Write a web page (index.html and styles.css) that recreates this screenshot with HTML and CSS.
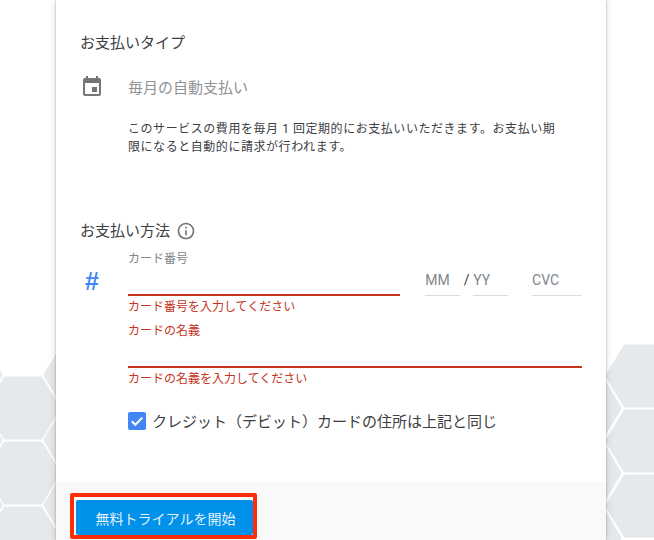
FILE: index.html
```html
<!DOCTYPE html>
<html lang="ja">
<head>
  <meta charset="UTF-8">
  <title>お支払い</title>
  <link rel="stylesheet" href="styles.css">
</head>
<body>
  <svg class="hex-bg" width="654" height="540" viewBox="0 0 654 540">
    <defs>
      <polygon id="hex" points="-35,0 -17.5,-29 17.5,-29 35,0 17.5,29 -17.5,29"></polygon>
    </defs>
    <g class="hex-cells">
      <use href="#hex" x="-35" y="375"></use>
      <use href="#hex" x="-35" y="440"></use>
      <use href="#hex" x="-35" y="505"></use>
      <use href="#hex" x="23" y="408"></use>
      <use href="#hex" x="23" y="473"></use>
      <use href="#hex" x="23" y="538"></use>
      <use href="#hex" x="81" y="375"></use>
      <use href="#hex" x="81" y="440"></use>
      <use href="#hex" x="81" y="505"></use>
      <use href="#hex" x="584" y="408"></use>
      <use href="#hex" x="584" y="473"></use>
      <use href="#hex" x="584" y="538"></use>
      <use href="#hex" x="643" y="376"></use>
      <use href="#hex" x="643" y="441"></use>
      <use href="#hex" x="643" y="506"></use>
    </g>
  </svg>

  <div class="card">
    <section class="pay-type">
      <h2 class="section-title">お支払いタイプ</h2>
      <div class="type-row">
        <svg class="calendar-icon" width="24" height="24" viewBox="0 0 24 24">
          <path d="M17 12h-5v5h5v-5zM16 1v2H8V1H6v2H5c-1.11 0-1.99.9-1.99 2L3 19c0 1.1.89 2 2 2h14c1.1 0 2-.9 2-2V5c0-1.1-.9-2-2-2h-1V1h-2zm3 18H5V8h14v11z"></path>
        </svg>
        <span class="type-name">毎月の自動支払い</span>
      </div>
      <p class="type-note">このサービスの費用を毎月 1 回定期的にお支払いいただきます。お支払い期限になると自動的に請求が行われます。</p>
    </section>

    <section class="pay-method">
      <h2 class="section-title method-title">
        お支払い方法
        <svg class="info-icon" width="20" height="20" viewBox="0 0 24 24">
          <path d="M11 7h2v2h-2zm0 4h2v6h-2zm1-9C6.48 2 2 6.48 2 12s4.48 10 10 10 10-4.48 10-10S17.52 2 12 2zm0 18c-4.41 0-8-3.59-8-8s3.59-8 8-8 8 3.59 8 8-3.59 8-8 8z"></path>
        </svg>
      </h2>

      <div class="card-row">
        <span class="hash">#</span>
        <div class="field number-field">
          <label class="field-label">カード番号</label>
          <div class="field-line error-line"></div>
          <div class="field-error">カード番号を入力してください</div>
        </div>
        <div class="small-field mm-field">
          <span class="small-text">MM</span>
          <div class="field-line"></div>
        </div>
        <span class="slash">/</span>
        <div class="small-field yy-field">
          <span class="small-text">YY</span>
          <div class="field-line"></div>
        </div>
        <div class="small-field cvc-field">
          <span class="small-text">CVC</span>
          <div class="field-line"></div>
        </div>
      </div>

      <div class="field name-field">
        <label class="field-label label-error">カードの名義</label>
        <div class="field-line error-line"></div>
        <div class="field-error">カードの名義を入力してください</div>
      </div>

      <div class="same-address">
        <span class="checkbox">
          <svg width="18" height="18" viewBox="0 0 18 18">
            <path d="M3.8 9.3l3.5 3.5 7-7.2" fill="none" stroke="#fff" stroke-width="2"></path>
          </svg>
        </span>
        <span class="same-text">クレジット（デビット）カードの住所は上記と同じ</span>
      </div>
    </section>

    <div class="card-footer">
      <div class="highlight">
        <button class="start-btn">無料トライアルを開始</button>
      </div>
    </div>
  </div>
</body>
</html>
```

FILE: styles.css
```css
html, body {
  margin: 0;
  padding: 0;
  height: 540px;
  overflow: hidden;
  background-color: #fff;
}
body {
  font-family: "Roboto", "Noto Sans CJK JP", sans-serif;
  color: #3c4043;
}
.hex-bg {
  position: absolute;
  top: 0;
  left: 0;
}
.hex-cells {
  fill: #e6e9ec;
  stroke: #e6e9ec;
  stroke-width: 5;
  stroke-linejoin: round;
}
.card {
  position: relative;
  box-sizing: border-box;
  width: 550px;
  height: 540px;
  margin-left: 56px;
  background-color: #fff;
  box-shadow: 0 0 2px rgba(0, 0, 0, 0.3), 0 0 8px rgba(0, 0, 0, 0.14);
  display: flex;
  flex-direction: column;
}
.pay-type {
  padding: 34px 24px 0 24px;
  height: 153px;
}
.section-title {
  margin: 0;
  font-size: 15px;
  font-weight: 400;
  line-height: 18px;
  color: #3c4043;
}
.type-row {
  display: flex;
  align-items: center;
  margin-top: 22px;
  height: 24px;
}
.calendar-icon {
  fill: #757575;
  margin-top: 2px;
}
.type-name {
  margin-left: 24px;
  font-size: 15px;
  color: #8f9396;
}
.type-note {
  margin: 22px 0 0 48px;
  width: 435px;
  font-size: 12px;
  letter-spacing: 0.55px;
  line-height: 18px;
  color: #3c4043;
}
.pay-method {
  padding: 0 24px;
  flex: 1;
}
.method-title {
  display: flex;
  align-items: center;
  gap: 6px;
  margin-top: 34px;
  margin-bottom: 8px;
}
.info-icon {
  fill: #757575;
}
.card-row {
  display: flex;
  align-items: flex-start;
}
.hash {
  width: 48px;
  padding-top: 20px;
  padding-left: 5px;
  box-sizing: border-box;
  font-family: "Liberation Sans", sans-serif;
  font-size: 25px;
  font-weight: 700;
  line-height: 24px;
  color: #4285f4;
}
.field {
  font-size: 12px;
}
.number-field {
  width: 273px;
}
.field-label {
  display: block;
  margin-top: 2px;
  line-height: 16px;
  color: #80868b;
}
.label-error {
  color: #c5341c;
}
.field-line {
  height: 1px;
  background-color: #dadce0;
}
.error-line {
  height: 2px;
  background-color: #c5341c;
  margin-top: 27px;
}
.field-error {
  margin-top: 3px;
  line-height: 16px;
  color: #c5341c;
}
.small-field {
  padding-top: 18px;
}
.small-text {
  display: block;
  height: 28px;
  font-size: 14px;
  line-height: 27px;
  color: #80868b;
}
.mm-field {
  width: 35px;
  margin-left: 25px;
}
.slash {
  width: 13px;
  margin-top: 18px;
  font-size: 14px;
  line-height: 27px;
  text-align: center;
}
.yy-field {
  width: 35px;
}
.cvc-field {
  width: 50px;
  margin-left: 24px;
}
.name-field {
  margin-left: 48px;
  margin-top: 8px;
}
.same-address {
  display: flex;
  align-items: center;
  gap: 6px;
  margin: 23px 0 0 48px;
}
.checkbox {
  display: flex;
  width: 18px;
  height: 18px;
  border-radius: 2px;
  background-color: #4285f4;
}
.same-text {
  font-size: 15px;
}
.card-footer {
  height: 58px;
  box-sizing: border-box;
  padding: 11px 0 0 14px;
  background-color: #f9f9f9;
}
.highlight {
  display: inline-block;
  border: 4px solid #ff2d0a;
  border-radius: 2px;
  padding: 3px 0 0 2px;
  background-color: #f9f9f9;
}
.start-btn {
  display: block;
  width: 177px;
  height: 35px;
  padding-left: 8px;
  border: none;
  border-radius: 2px;
  background-color: #0091ea;
  color: #e3f2fd;
  font-family: inherit;
  font-size: 14px;
}
```
